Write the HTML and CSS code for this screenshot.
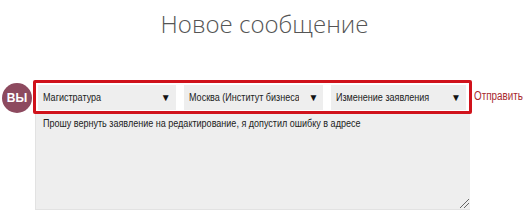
FILE: index.html
```html
<!DOCTYPE html>
<html lang="ru">
<head>
<meta charset="utf-8">
<link rel="stylesheet" href="styles.css">
</head>
<body>
<h1 class="title">Новое сообщение</h1>
<div class="row">
  <div class="avatar">ВЫ</div>
  <div class="form">
    <div class="selects">
      <div class="select s1"><span class="label"><span class="cond">Магистратура</span></span><span class="arrow">▼</span></div>
      <div class="select s2"><span class="label"><span class="cond">Москва (Институт бизнеса</span></span><span class="arrow">▼</span></div>
      <div class="select s3"><span class="label"><span class="cond">Изменение заявления</span></span><span class="arrow">▼</span></div>
    </div>
    <div class="textarea"><span class="cond">Прошу вернуть заявление на редактирование, я допустил ошибку в адресе</span><span class="grip"></span></div>
  </div>
  <a class="send"><span class="cond">Отправить</span></a>
</div>
</body>
</html>
```
FILE: styles.css
```css
html, body { margin: 0; padding: 0; background: #fff; }
body { width: 529px; height: 216px; overflow: hidden; font-family: "Liberation Sans", Arial, sans-serif; }
.cond { display: inline-block; white-space: nowrap; transform: scaleX(0.82); transform-origin: 0 50%; }
.title {
  margin: 0;
  padding-top: 7px;
  height: 74px;
  box-sizing: border-box;
  text-align: center;
  font-family: "Open Sans", sans-serif;
  font-weight: 300;
  font-size: 24px;
  line-height: 33px;
  color: #555;
}
.row { display: flex; align-items: flex-start; padding-left: 2px; }
.avatar {
  width: 30px; height: 30px; border-radius: 50%;
  background: #8d4a5f; color: #fff;
  font-size: 12px; font-weight: bold;
  display: flex; align-items: center; justify-content: center;
  margin-top: 9px; flex: none;
}
.form { margin-left: 1px; width: 439px; display: flex; flex-direction: column; flex: none; }
.selects {
  border: 3px solid #d0121b;
  border-radius: 2px;
  height: 34px; box-sizing: border-box;
  display: flex; align-items: center; gap: 8px;
  padding: 0 3px 0 2px;
  margin-top: 6px;
}
.select {
  background: #eee; height: 25px; box-sizing: border-box;
  display: flex; align-items: center;
  padding: 0 5px 0 5px; font-size: 11px; color: #222;
  white-space: nowrap;
}
.s1 { width: 138px; }
.s2 { width: 140px; }
.s3 { width: 135px; }
.label { flex: 1; overflow: hidden; display: block; }
.s2 .label { flex: none; width: 110px; }
.arrow { font-size: 10px; color: #111; margin-left: auto; }
.textarea {
  position: relative;
  margin-left: 2px; width: 435px; height: 96px; box-sizing: border-box;
  background: #eee; border-left: 1px solid #e2e2e2; border-bottom: 1px solid #e2e2e2;
  font-size: 11px; color: #222; padding: 3px 7px;
}
.grip {
  position: absolute; right: 1px; bottom: 1px; width: 9px; height: 9px;
  background: linear-gradient(135deg, transparent 45%, #666 45%, #666 52%, transparent 52%, transparent 70%, #666 70%, #666 77%, transparent 77%);
}
.send { color: #a8292e; font-size: 12px; margin-left: 2px; margin-top: 15px; }
```
